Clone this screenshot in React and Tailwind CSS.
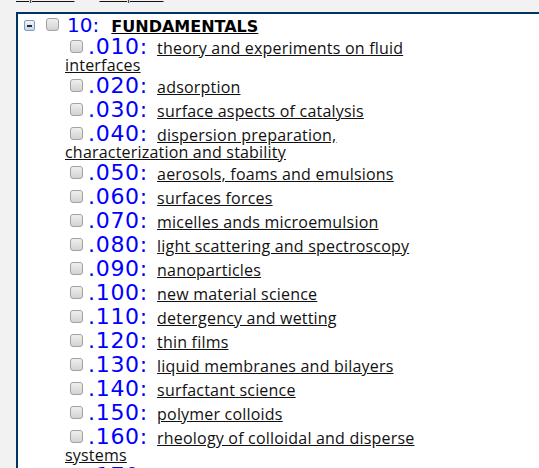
const ITEMS = [
  [".010:", "theory and experiments on fluid interfaces"],
  [".020:", "adsorption"],
  [".030:", "surface aspects of catalysis"],
  [".040:", "dispersion preparation, characterization and stability"],
  [".050:", "aerosols, foams and emulsions"],
  [".060:", "surfaces forces"],
  [".070:", "micelles ands microemulsion"],
  [".080:", "light scattering and spectroscopy"],
  [".090:", "nanoparticles"],
  [".100:", "new material science"],
  [".110:", "detergency and wetting"],
  [".120:", "thin films"],
  [".130:", "liquid membranes and bilayers"],
  [".140:", "surfactant science"],
  [".150:", "polymer colloids"],
  [".160:", "rheology of colloidal and disperse systems"],
  [".170:", "electrokinetic phenomena"],
];

function Check() {
  return (
    <span className="inline-block w-[13px] h-[13px] mb-[1px] rounded-[3px] border border-[#a2a2a2] bg-gradient-to-b from-[#efefef] to-[#d2d2d2]" />
  );
}

function Collapse() {
  return (
    <span className="inline-block w-[11px] h-[11px] mb-[1px] mr-[11px] rounded-[2px] border border-[#7f9cc4] bg-gradient-to-b from-[#f0f4fa] to-[#c6d5ea]">
      <span className="block mt-[3.5px] mx-auto w-[5px] h-[2px] bg-[#2a2a2a]" />
    </span>
  );
}

export default function App() {
  return (
    <div className="h-[468px] overflow-hidden bg-[#f2f2f2] font-['Open_Sans',sans-serif]">
      {/* Expand / collapse links, mostly scrolled out of view */}
      <div className="-mt-[12px] pl-[16px] text-[12px] leading-[16px] text-[#111]">
        <a className="underline">Expand All</a>
        <a className="underline ml-[25px]">Collapse All</a>
      </div>

      {/* Tree */}
      <div className="mt-[8px] ml-[16px] w-[600px] h-[700px] bg-white border-l-2 border-t-2 border-[#003366] pl-[6px] pt-[3px]">
        <div className="text-[16px] leading-[15px] text-black">
          <Collapse />
          <Check />
          <span className="ml-[8px] font-['DejaVu_Sans',sans-serif] text-[20px] leading-[17px] text-[#0000ff]">
            10:
          </span>{" "}
          <a className="ml-[8px] font-['DejaVu_Sans',sans-serif] font-bold text-[16px] underline">
            FUNDAMENTALS
          </a>
        </div>

        <div className="pl-[41px] w-[416px]">
          {ITEMS.map(([num, label]) => (
            <div key={num} className="pt-[2px] text-[16px] leading-[15px] text-[#111]">
              <span className="ml-[5px] mr-[5px] inline-block">
                <Check />
              </span>
              <span className="font-['DejaVu_Sans',sans-serif] text-[22px] leading-[22px] tracking-[0.7px] text-[#0000ff]">
                {num}
              </span>{" "}
              <a className="ml-[5px] tracking-[0.2px] underline">{label}</a>
            </div>
          ))}
        </div>
      </div>
    </div>
  );
}
